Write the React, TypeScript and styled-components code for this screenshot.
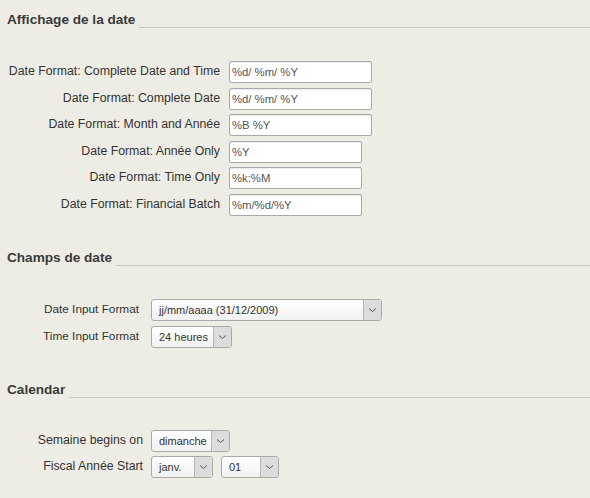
import React from "react";
import styled, { createGlobalStyle } from "styled-components";

const Global = createGlobalStyle`
  html, body { margin: 0; padding: 0; background: #eeede5; }
  body { font-family: "Liberation Sans", Arial, sans-serif; color: #333; }
`;

const Page = styled.div`
  padding: 12px 0 0 7px;
  display: flex;
  flex-direction: column;
`;

const Section = styled.section<{ $top: number }>`
  margin-top: ${(p) => p.$top}px;
  display: flex;
  flex-direction: column;
`;

const Header = styled.div`
  display: flex;
  align-items: flex-end;
  height: 16px;
`;

const HeaderText = styled.h2`
  margin: 0;
  font-size: 13.6px;
  line-height: 16px;
  font-weight: bold;
  color: #3a3a3a;
  white-space: nowrap;
  padding-right: 4px;
`;

const Rule = styled.div`
  flex: 1;
  border-bottom: 1px solid #c9c8bd;
`;

const Rows = styled.div<{ $top: number; $gap: number }>`
  margin-top: ${(p) => p.$top}px;
  display: flex;
  flex-direction: column;
  gap: ${(p) => p.$gap}px;
`;

const Row = styled.div<{ $labelWidth: number; $gap: number }>`
  display: grid;
  grid-template-columns: ${(p) => p.$labelWidth}px auto;
  column-gap: ${(p) => p.$gap}px;
  align-items: start;
  height: 22px;
`;

const Label = styled.label<{ $size?: number }>`
  text-align: right;
  font-size: ${(p) => p.$size ?? 12.3}px;
  line-height: 15px;
  padding-top: 3px;
  color: #333;
  white-space: nowrap;
`;

const Controls = styled.div`
  display: flex;
  gap: 8px;
`;

const TextInput = styled.input<{ $w: number }>`
  box-sizing: border-box;
  width: ${(p) => p.$w}px;
  height: 22px;
  margin: 0;
  padding: 0 2px;
  border: 1px solid #a9a9a9;
  border-radius: 2px;
  background: #fff;
  box-shadow: inset 0 1px 1px rgba(0, 0, 0, 0.08);
  font-family: "Liberation Sans", Arial, sans-serif;
  font-size: 11.3px;
  color: #555;
  outline: none;
`;

const SelectBox = styled.div<{ $w: number }>`
  box-sizing: border-box;
  width: ${(p) => p.$w}px;
  height: 22px;
  display: flex;
  border: 1px solid #a9a9a9;
  border-radius: 3px;
  overflow: hidden;
  background: linear-gradient(#ffffff, #f1f1f1);
`;

const SelectValue = styled.span`
  flex: 1;
  font-size: 11px;
  line-height: 20px;
  padding-left: 7px;
  color: #333;
  white-space: nowrap;
  overflow: hidden;
`;

const ArrowBox = styled.span`
  width: 17px;
  display: flex;
  align-items: center;
  justify-content: center;
  background: #dcdcdc;
  border-left: 1px solid #b5b5b5;
`;

const Chevron = () => (
  <svg width="9" height="6" viewBox="0 0 9 6">
    <path d="M1 1.5 L4.5 4.5 L8 1.5" fill="none" stroke="#555" strokeWidth="1" />
  </svg>
);

const Select = ({ w, value }: { w: number; value: string }) => (
  <SelectBox $w={w}>
    <SelectValue>{value}</SelectValue>
    <ArrowBox>
      <Chevron />
    </ArrowBox>
  </SelectBox>
);

const dateRows: [string, string, number][] = [
  ["Date Format: Complete Date and Time", "%d/ %m/ %Y", 143],
  ["Date Format: Complete Date", "%d/ %m/ %Y", 143],
  ["Date Format: Month and Année", "%B %Y", 143],
  ["Date Format: Année Only", "%Y", 133],
  ["Date Format: Time Only", "%k:%M", 133],
  ["Date Format: Financial Batch", "%m/%d/%Y", 133],
];

export default function App() {
  return (
    <>
      <Global />
      <Page>
        <Section $top={0}>
          <Header>
            <HeaderText>Affichage de la date</HeaderText>
            <Rule />
          </Header>
          <Rows $top={33} $gap={4.6}>
            {dateRows.map(([label, val, w]) => (
              <Row key={label} $labelWidth={213} $gap={9}>
                <Label>{label}</Label>
                <Controls>
                  <TextInput $w={w} defaultValue={val} readOnly />
                </Controls>
              </Row>
            ))}
          </Rows>
        </Section>
        <Section $top={34}>
          <Header>
            <HeaderText>Champs de date</HeaderText>
            <Rule />
          </Header>
          <Rows $top={33} $gap={5}>
            <Row $labelWidth={132} $gap={12}>
              <Label $size={11.8}>Date Input Format</Label>
              <Controls>
                <Select w={231} value="jj/mm/aaaa (31/12/2009)" />
              </Controls>
            </Row>
            <Row $labelWidth={132} $gap={12}>
              <Label $size={11.8}>Time Input Format</Label>
              <Controls>
                <Select w={81} value="24 heures" />
              </Controls>
            </Row>
          </Rows>
        </Section>
        <Section $top={34}>
          <Header>
            <HeaderText>Calendar</HeaderText>
            <Rule />
          </Header>
          <Rows $top={32} $gap={4}>
            <Row $labelWidth={136} $gap={8}>
              <Label>Semaine begins on</Label>
              <Controls>
                <Select w={79} value="dimanche" />
              </Controls>
            </Row>
            <Row $labelWidth={136} $gap={8}>
              <Label>Fiscal Année Start</Label>
              <Controls>
                <Select w={62} value="janv." />
                <Select w={58} value="01" />
              </Controls>
            </Row>
          </Rows>
        </Section>
      </Page>
    </>
  );
}
